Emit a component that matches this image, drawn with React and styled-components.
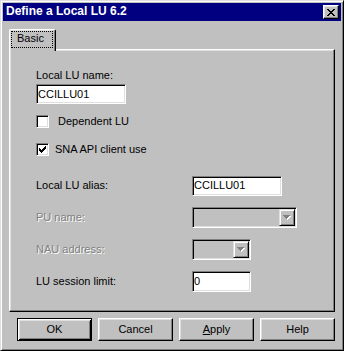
import React from 'react'
import styled, { createGlobalStyle, css } from 'styled-components'

const Global = createGlobalStyle`
  html, body { margin: 0; padding: 0; background: #c0c0c0; }
  body {
    font-family: "Liberation Sans", Arial, sans-serif;
    font-size: 11px;
    color: #000;
  }
`

const raised = css`
  border: 1px solid;
  border-color: #fff #000 #000 #fff;
  box-shadow: inset -1px -1px #808080, inset 1px 1px #dfdfdf;
`

const sunken = css`
  border: 1px solid;
  border-color: #808080 #fff #fff #808080;
  box-shadow: inset 1px 1px #000, inset -1px -1px #dfdfdf;
`

const Window = styled.div`
  width: 344px;
  height: 351px;
  box-sizing: border-box;
  background: #c0c0c0;
  border: 1px solid;
  border-color: #dfdfdf #000 #000 #dfdfdf;
  box-shadow: inset 1px 1px #fff, inset -1px -1px #808080;
  padding: 2px;
  display: flex;
  flex-direction: column;
`

const TitleBar = styled.div`
  height: 18px;
  background: #000080;
  color: #fff;
  font-weight: bold;
  font-size: 12px;
  line-height: 16px;
  padding: 0 2px 2px 3px;
  box-sizing: border-box;
  display: flex;
  align-items: center;
  justify-content: space-between;
`

const CloseButton = styled.div`
  width: 16px;
  height: 14px;
  box-sizing: border-box;
  background: #c0c0c0;
  margin-top: 2px;
  ${raised}
  display: flex;
  align-items: center;
  justify-content: center;
`

const Body = styled.div`
  padding: 8px 6px 0 6px;
  display: flex;
  flex-direction: column;
`

const TabStrip = styled.div`
  display: flex;
`

const Tab = styled.div`
  position: relative;
  z-index: 1;
  width: 47px;
  height: 22px;
  margin-bottom: -2px;
  box-sizing: border-box;
  background: #c0c0c0;
  border-top: 1px solid #fff;
  border-left: 1px solid #fff;
  border-right: 1px solid #000;
  border-radius: 2px 2px 0 0;
  box-shadow: inset -1px 0 #808080, inset 1px 1px #dfdfdf;
  padding: 1px 0 0 1px;
`

const FocusRect = styled.div`
  width: 42px;
  height: 17px;
  box-sizing: border-box;
  border: 1px dotted #000;
  padding-left: 5px;
  line-height: 13px;
`

const Panel = styled.div`
  height: 263px;
  box-sizing: border-box;
  border: 1px solid;
  border-color: #fff #000 #000 #fff;
  box-shadow: inset -1px -1px #808080, inset 1px 1px #dfdfdf;
  padding: 19px 0 0 26px;
  display: flex;
  flex-direction: column;
  align-items: flex-start;
`

const Label = styled.div`
  line-height: 13px;
  white-space: nowrap;
  color: ${p => (p.disabled ? '#808080' : '#000')};
  text-shadow: ${p => (p.disabled ? '1px 1px 0 #fff' : 'none')};
`

const Field = styled.div`
  width: ${p => p.w}px;
  height: ${p => p.h || 20}px;
  margin-top: ${p => p.mt || 0}px;
  box-sizing: border-box;
  background: #fff;
  ${sunken}
  padding: 0 1px;
  display: flex;
  align-items: center;
  line-height: 13px;
`

const CheckRow = styled.div`
  display: flex;
  align-items: center;
  gap: ${p => p.gap}px;
  margin-top: ${p => p.mt}px;
  line-height: 13px;
`

const CheckBox = styled.div`
  width: 13px;
  height: 13px;
  box-sizing: border-box;
  background: #fff;
  ${sunken}
  display: flex;
  align-items: center;
  justify-content: center;
`

const FormGrid = styled.div`
  margin-top: 19px;
  display: grid;
  grid-template-columns: 156px auto;
  grid-auto-rows: 21px;
  row-gap: 11px;
  align-items: center;
  justify-items: start;
`

const Combo = styled.div`
  width: ${p => p.w}px;
  height: 21px;
  box-sizing: border-box;
  background: #c0c0c0;
  ${sunken}
  padding: 1px;
  display: flex;
  justify-content: flex-end;
`

const DropButton = styled.div`
  width: 16px;
  height: 17px;
  box-sizing: border-box;
  background: #c0c0c0;
  border: 1px solid;
  border-color: #dfdfdf #000 #000 #dfdfdf;
  box-shadow: inset 1px 1px #fff, inset -1px -1px #808080;
  display: flex;
  align-items: center;
  justify-content: center;
`

const ButtonRow = styled.div`
  margin-top: 6px;
  display: flex;
  justify-content: flex-end;
  gap: 6px;
`

const Button = styled.div`
  width: 75px;
  height: 23px;
  box-sizing: border-box;
  display: flex;
  align-items: center;
  justify-content: center;
  background: #c0c0c0;
  ${p =>
    p.primary
      ? css`
          border: 1px solid #000;
          box-shadow: inset 1px 1px #fff, inset -1px -1px #000,
            inset 2px 2px #dfdfdf, inset -2px -2px #808080;
        `
      : raised}
  padding-bottom: 1px;
`

const CloseGlyph = () => {
  const px = [
    [0, 0], [1, 0], [6, 0], [7, 0],
    [1, 1], [2, 1], [5, 1], [6, 1],
    [2, 2], [3, 2], [4, 2], [5, 2],
    [3, 3], [4, 3],
    [2, 4], [3, 4], [4, 4], [5, 4],
    [1, 5], [2, 5], [5, 5], [6, 5],
    [0, 6], [1, 6], [6, 6], [7, 6],
  ]
  return (
    <svg width="8" height="7" shapeRendering="crispEdges">
      {px.map(([x, y]) => <rect key={x + '-' + y} x={x} y={y} width="1" height="1" fill="#000" />)}
    </svg>
  )
}

const CheckGlyph = () => {
  const rows = ['......#', '.....##', '#...###', '##.###.', '#####..', '.###...', '..#....']
  return (
    <svg width="7" height="7" shapeRendering="crispEdges">
      {rows.flatMap((r, y) =>
        r.split('').map((c, x) => (c === '#' ? <rect key={x + '-' + y} x={x} y={y} width="1" height="1" fill="#000" /> : null))
      )}
    </svg>
  )
}

const ArrowGlyph = () => (
  <svg width="8" height="5" shapeRendering="crispEdges">
    <path d="M1 1h7v1h-1v1h-1v1h-1v1h-1v-1h-1v-1h-1v-1h-1z" fill="#fff" />
    <path d="M0 0h7v1h-1v1h-1v1h-1v1h-1v-1h-1v-1h-1v-1h-1z" fill="#808080" />
  </svg>
)

const App = () => (
  <>
    <Global />
    <Window>
      <TitleBar>
        <span>Define a Local LU 6.2</span>
        <CloseButton><CloseGlyph /></CloseButton>
      </TitleBar>
      <Body>
        <TabStrip>
          <Tab><FocusRect>Basic</FocusRect></Tab>
        </TabStrip>
        <Panel>
          <Label>Local LU name:</Label>
          <Field w={90} mt={2}>CCILLU01</Field>
          <CheckRow mt={11} gap={9}>
            <CheckBox />
            <span>Dependent LU</span>
          </CheckRow>
          <CheckRow mt={15} gap={6}>
            <CheckBox><CheckGlyph /></CheckBox>
            <span>SNA API client use</span>
          </CheckRow>
          <FormGrid>
            <Label>Local LU alias:</Label>
            <Field w={90}>CCILLU01</Field>
            <Label disabled>PU name:</Label>
            <Combo w={105}><DropButton><ArrowGlyph /></DropButton></Combo>
            <Label disabled>NAU address:</Label>
            <Combo w={59}><DropButton><ArrowGlyph /></DropButton></Combo>
            <Label>LU session limit:</Label>
            <Field w={59} h={21}>0</Field>
          </FormGrid>
        </Panel>
        <ButtonRow>
          <Button primary>OK</Button>
          <Button>Cancel</Button>
          <Button><span><u>A</u>pply</span></Button>
          <Button>Help</Button>
        </ButtonRow>
      </Body>
    </Window>
  </>
)

export default App
